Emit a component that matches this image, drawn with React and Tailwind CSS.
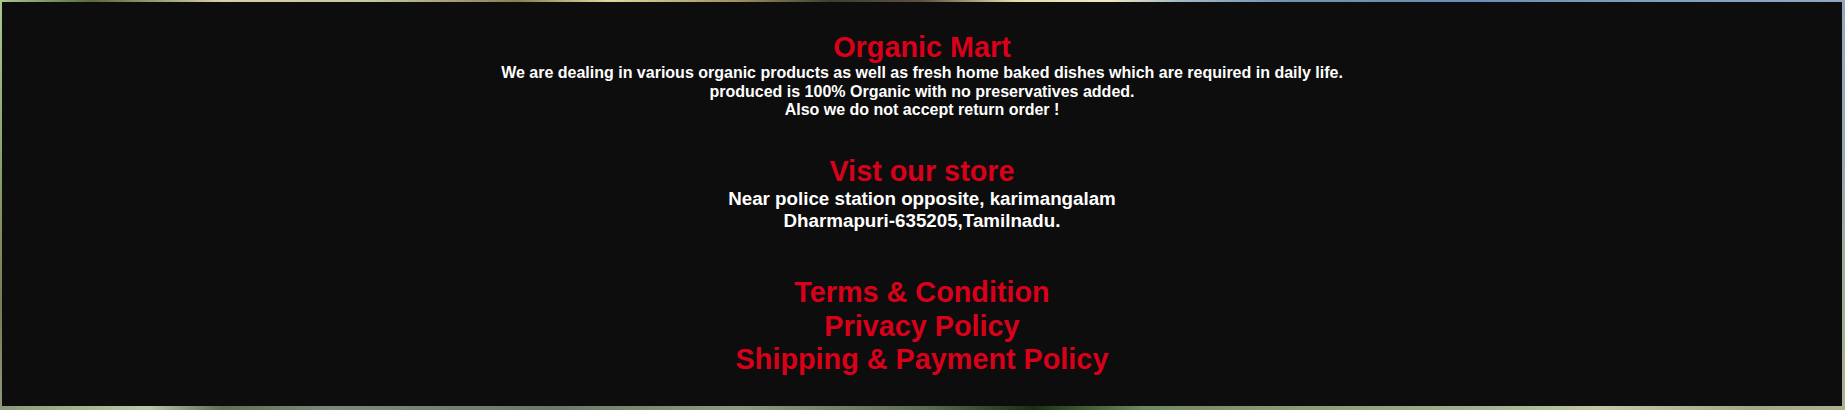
import React from "react";

export default function App() {
  return (
    <div className="flex flex-col w-full h-[410px] font-['Liberation_Sans',Arial,sans-serif]">
      <div className="h-[2px] shrink-0 bg-[linear-gradient(to_right,#a8c890_0%,#5a6a3a_5%,#d8d0a8_12%,#c8c8a0_20%,#8a8050_28%,#e0d8a0_33%,#a09060_40%,#3a4030_45%,#605040_50%,#e8dca8_55%,#f0e8c0_60%,#a0b8c8_64%,#7090b0_70%,#6890b8_80%,#80a0c0_90%,#90a8c0_100%)]" />
      <div className="flex flex-1 min-h-0">
        <div className="w-[2px] shrink-0 bg-[linear-gradient(to_bottom,#a8c890,#8aa070_40%,#7a7a58_75%,#8a9a78)]" />
        <main className="flex-1 bg-[#0d0d0d] flex flex-col items-center text-center pt-[29px]">
          <h2 className="text-[28.8px] font-bold leading-[33.1px] text-[#d9001a]">Organic Mart</h2>
          <p className="text-[16px] font-bold leading-[18.4px] text-white">
            We are dealing in various organic products as well as fresh home baked dishes which are required in daily life.
            <br />
            produced is 100% Organic with no preservatives added.
            <br />
            Also we do not accept return order !
          </p>
          <h2 className="mt-[36px] text-[28.8px] font-bold leading-[33.1px] text-[#d9001a]">Vist our store</h2>
          <p className="text-[18.75px] font-bold leading-[21.5px] text-white">
            Near police station opposite, karimangalam
            <br />
            Dharmapuri-635205,Tamilnadu.
          </p>
          <nav className="mt-[45px] flex flex-col items-center text-[28.8px] font-bold leading-[33.2px] text-[#d9001a]">
            <a href="#" className="no-underline">Terms &amp; Condition</a>
            <a href="#" className="no-underline">Privacy Policy</a>
            <a href="#" className="no-underline">Shipping &amp; Payment Policy</a>
          </nav>
        </main>
        <div className="w-[3px] shrink-0 bg-[linear-gradient(to_bottom,#90a8c0,#98aab0_40%,#a0b090_80%,#b0b090)]" />
      </div>
      <div className="h-[4px] shrink-0 bg-[linear-gradient(to_right,#8a9a78_0%,#b8c8a8_8%,#607058_12%,#808878_18%,#6a7a68_30%,#909a80_40%,#5a7050_50%,#1a3010_56%,#708860_62%,#8a9a78_70%,#a0b090_80%,#c0c8a8_87%,#a0a888_95%,#b0b090_100%)]" />
    </div>
  );
}
